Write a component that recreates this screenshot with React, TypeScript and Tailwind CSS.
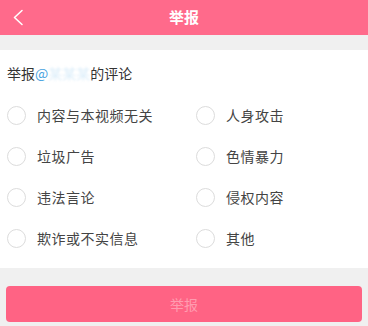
import React, { useState } from 'react';

const reasons = [
  '内容与本视频无关',
  '人身攻击',
  '垃圾广告',
  '色情暴力',
  '违法言论',
  '侵权内容',
  '欺诈或不实信息',
  '其他',
];

export default function App() {
  const [selected, setSelected] = useState<number | null>(null);

  return (
    <div
      className="w-[368px] h-[326px] bg-[#f0f0f0] flex flex-col overflow-hidden"
      style={{ fontFamily: '"Noto Sans CJK SC", "Noto Sans", sans-serif' }}
    >
      {/* header */}
      <div className="h-[35px] bg-[#ff6a8b] flex items-center relative shrink-0">
        <button className="absolute left-[11px] top-[9px] text-white">
          <svg width="14" height="17" viewBox="0 0 14 17" fill="none">
            <path d="M11 1.5L3.5 8.5l7.5 7" stroke="white" strokeWidth="1.6" strokeLinecap="round" strokeLinejoin="round" />
          </svg>
        </button>
        <div className="flex-1 text-center text-white text-[15px] font-semibold">举报</div>
      </div>

      {/* body */}
      <div className="mt-[15px] bg-white h-[218px] px-[7px] pt-[10px]">
        <div className="text-[14px] text-[#333] leading-[26px]">
          举报<span className="text-[#4aa3df]">@</span>
          <span className="text-[#dceefa] blur-[1px]">某某某</span>的评论
        </div>
        <div className="grid grid-cols-2 mt-[16px] gap-y-[15px]">
          {reasons.map((r, i) => (
            <button
              key={r}
              onClick={() => setSelected(i)}
              className={
                'flex items-center h-[26px] text-left ' + (i % 2 === 1 ? 'pl-[12px]' : '')
              }
            >
              <span
                className={
                  'w-[19px] h-[19px] rounded-full border-[1.5px] shrink-0 ' +
                  (selected === i ? 'border-[#ff6a8b] bg-[#ff6a8b]' : 'border-[#dcdcdc]')
                }
              />
              <span className="ml-[11px] text-[14px] text-[#444] tracking-[0.5px]">{r}</span>
            </button>
          ))}
        </div>
      </div>

      {/* submit */}
      <div className="px-[6px] pt-[18px]">
        <button className="w-full h-[36px] rounded-[4px] bg-[#ff6384] text-[#ff9cb0] text-[14px]">
          举报
        </button>
      </div>
    </div>
  );
}
